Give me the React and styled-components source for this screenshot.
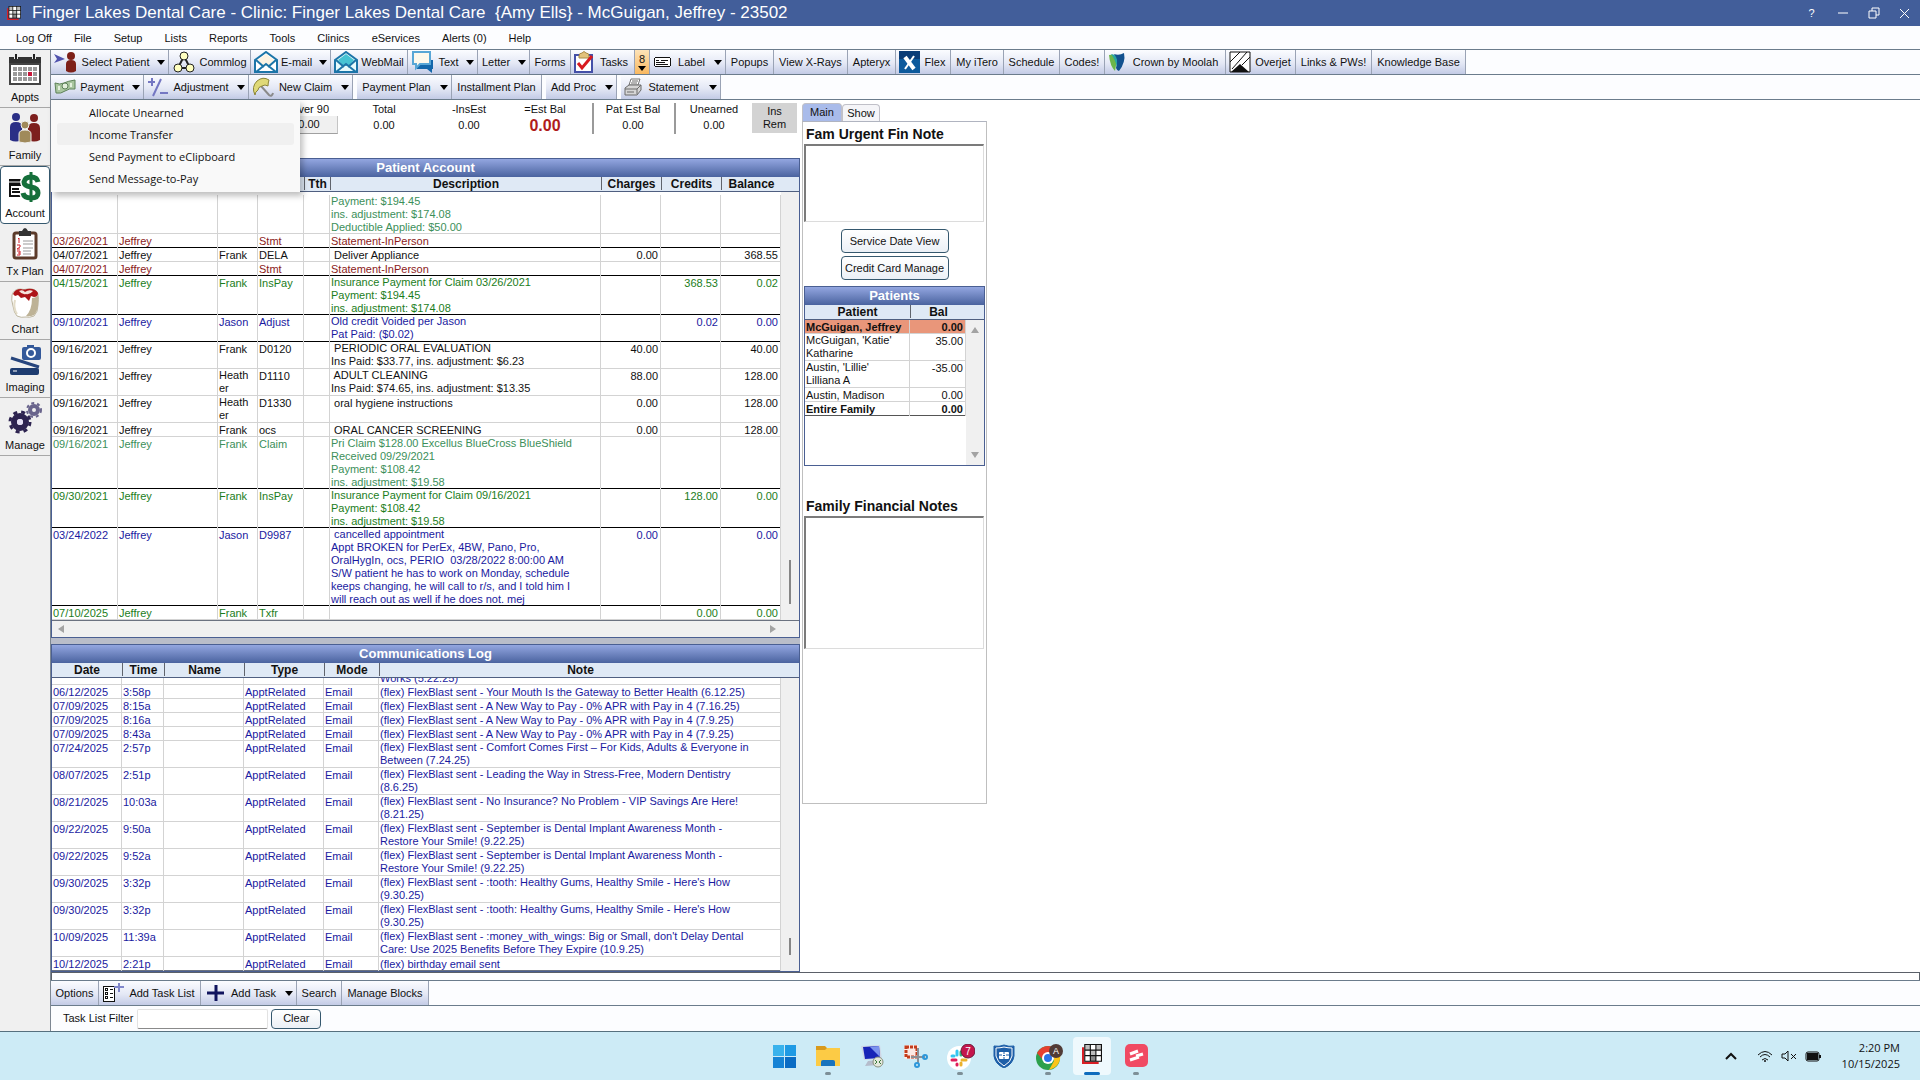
import React from 'react'
import styled, { createGlobalStyle, css } from 'styled-components'

const GlobalStyle = createGlobalStyle`
    * { box-sizing: border-box; }
    body {
        margin: 0;
        font-family: "Liberation Sans", Arial, sans-serif;
        font-size: 11px;
        line-height: 13px;
        color: #111111;
        background: #ffffff;
    }
    button, input, textarea { font: inherit; color: inherit; }
    button { padding: 0; cursor: pointer; }
    svg { display: block; flex: none; }
`

const Page = styled.div`
    display: flex;
    flex-direction: column;
    height: 100vh;
`
const TitleBar = styled.header`
    display: flex;
    align-items: center;
    gap: 11px;
    height: 26px;
    padding-left: 7px;
    flex: none;
    color: #ffffff;
    background: #425e9a;
`
const Title = styled.h1`
    flex: 1;
    margin: 0;
    font-size: 17px;
    line-height: 20px;
    font-weight: 400;
    white-space: pre;
`
const WindowControls = styled.div`
    display: flex;
`
const WindowButton = styled.button`
    display: flex;
    align-items: center;
    justify-content: center;
    width: 31px;
    height: 26px;
    border: 0;
    color: #ffffff;
    background: transparent;
`
const MenuBar = styled.nav`
    display: flex;
    align-items: center;
    height: 23px;
    padding: 1px 0 0 5px;
    flex: none;
    background: #fcfdff;
`
const MenuLink = styled.a`
    padding: 0 11px;
    color: #111111;
    text-decoration: none;
`
const Body = styled.div`
    display: flex;
    flex: 1;
    min-height: 0;
    border-bottom: 1px solid #56707e;
`
const Sidebar = styled.nav`
    width: 51px;
    flex: none;
    border-top: 1px solid #6b7c8c;
    border-right: 1px solid #7d8792;
    background: #f0f0f0;
`
const ModuleButton = styled.button`
    display: flex;
    flex-direction: column;
    align-items: center;
    justify-content: space-between;
    width: 50px;
    height: 58px;
    padding: 4px 0 3px;
    border: 0;
    border-bottom: 1px solid #a8a8a8;
    background: #f0f0f0;
    ${p => p.$active && css`
        border: 1px solid #35586e;
        border-radius: 4px;
        background: #ffffff;
    `}
`
const Content = styled.div`
    display: flex;
    flex-direction: column;
    flex: 1;
    min-width: 0;
`
const Toolbar = styled.div`
    display: flex;
    height: 25px;
    flex: none;
    border-top: 1px solid #6b7c8c;
    background: #fcfdff;
`
const ToolItem = styled.div`
    position: relative;
    display: flex;
    width: ${p => p.$width}px;
    margin-right: ${p => p.$space || 0}px;
`
const ToolButton = styled.button`
    display: flex;
    align-items: center;
    width: 100%;
    padding-left: ${p => p.$icon ? 3 : 0}px;
    border: 0;
    border-right: 1px solid #9aa3b5;
    white-space: nowrap;
    background: ${p => p.$hot
        ? 'linear-gradient(#fde3b8, #f9b860)'
        : 'linear-gradient(#fbfcff, #e4e8f5 55%, #c3cbe6)'};
`
const ToolLabel = styled.span`
    flex: 1;
    text-align: center;
`
const ArrowBox = styled.span`
    display: flex;
    justify-content: center;
    width: 15px;
`
const DropMenu = styled.ul`
    position: absolute;
    z-index: 5;
    top: 25px;
    left: 0;
    width: 249px;
    margin: 0;
    padding: 1px 6px 3px;
    list-style: none;
    background: #f9f9f9;
    box-shadow: 3px 4px 6px rgba(0, 0, 0, 0.25);
`
const DropItem = styled.button`
    display: block;
    width: 100%;
    height: 22px;
    padding-left: 32px;
    border: 0;
    border-radius: 3px;
    font-family: "Open Sans", "Noto Sans", sans-serif;
    font-size: 11px;
    text-align: left;
    background: ${p => p.$active ? '#f0f0f0' : 'transparent'};
`
const Workspace = styled.div`
    display: flex;
    gap: 2px;
    flex: 1;
    min-height: 0;
    border-top: 1px solid #6b7c8c;
`
const AccountColumn = styled.main`
    display: flex;
    flex-direction: column;
    width: 749px;
    min-height: 0;
    flex: none;
`
const Summary = styled.div`
    display: flex;
    height: 58px;
    padding: 3px 0 0 230px;
    flex: none;
`
const Stat = styled.div`
    display: flex;
    flex-direction: column;
    align-items: center;
    width: ${p => p.$width}px;
`
const StatValue = styled.span`
    display: flex;
    align-items: center;
    justify-content: center;
    width: 100%;
    height: 18px;
    ${p => p.$boxed && css`
        border-right: 1px solid #c4c4c4;
        border-bottom: 1px solid #a0a0a0;
        background: #f0f0f0;
    `}
    ${p => p.$total && css`
        color: #b01c1c;
        font-size: 16px;
        font-weight: 700;
    `}
`
const StatDivider = styled.span`
    width: 2px;
    height: 31px;
    margin-left: ${p => p.$gap || 0}px;
    background: #9a9a9a;
`
const InsRemButton = styled.button`
    width: 45px;
    height: 30px;
    border: 0;
    background: #d3d3d3;
`
const Splitter = styled.div`
    height: 6px;
    flex: none;
    background: #b9bdc9;
`
const Panel = styled.section`
    display: flex;
    flex-direction: column;
    min-height: 0;
    flex: ${p => p.$grow ? 1 : 'none'};
    border: 1px solid #4a5f92;
    background: #ffffff;
`
const PanelTitle = styled.h2`
    height: 18px;
    flex: none;
    margin: 0;
    color: #ffffff;
    font-size: 13px;
    line-height: 18px;
    text-align: center;
    background: linear-gradient(#93a6e0, #4a639f);
`
const PanelBody = styled.div`
    display: flex;
    flex: 1;
    min-height: 0;
`
const Table = styled.table`
    display: flex;
    flex-direction: column;
    flex: 1;
    min-width: 0;
    min-height: 0;
    thead, tbody { display: block; }
    tbody {
        display: flex;
        flex-direction: column;
        justify-content: ${p => p.$scrolled ? 'flex-end' : 'flex-start'};
        flex: 1;
        min-height: 0;
        overflow: hidden;
    }
    tr {
        display: grid;
        flex: none;
        grid-template-columns: ${p => p.$columns};
    }
`
const HeadRow = styled.tr`
    height: 15px;
    border-bottom: 1px solid #4f5f80;
    background: #dfe9f5;
`
const HeadCell = styled.th`
    display: flex;
    justify-content: center;
    height: 13px;
    padding: 0;
    font-size: 12px;
    line-height: 14px;
    & + & { border-left: 1px solid #60646c; }
`
const Row = styled.tr`
    color: ${p => p.$color};
    border-bottom: 1px solid ${p => p.$line || '#d3d3d3'};
    background: ${p => p.$fill || 'transparent'};
    font-weight: ${p => p.$bold ? 700 : 400};
    padding-top: ${p => p.$first ? 3 : 0}px;
`
// one-line text sits a pixel lower than the first line of a wrapped one
const Cell = styled.td`
    min-width: 0;
    padding: ${p => p.$lines === 1 ? 1 : 0}px 2px 0 1px;
    white-space: pre;
    text-align: ${p => p.$right ? 'right' : 'left'};
    border-right: 1px solid #d3d3d3;
    margin-bottom: ${p => p.$lines === 2 ? 0 : -1}px;
`
const Track = styled.div`
    display: flex;
    flex-direction: column;
    width: 18px;
    flex: none;
    background: #f0f0f0;
`
const TrackHead = styled.div`
    height: 15px;
    flex: none;
    border-bottom: 1px solid #4f5f80;
    background: #dfe9f5;
`
const TrackBody = styled.div`
    display: flex;
    flex-direction: column;
    align-items: center;
    justify-content: ${p => p.$spread ? 'space-between' : 'flex-end'};
    flex: 1;
    padding: ${p => p.$spread ? '6px 0' : '0 0 16px'};
`
const Thumb = styled.span`
    width: 2px;
    height: ${p => p.$size}px;
    background: #868686;
`
const HorizontalTrack = styled.div`
    display: flex;
    align-items: center;
    justify-content: space-between;
    height: 17px;
    padding: 0 22px 0 5px;
    border-top: 1px solid #6b7280;
    background: #f0f0f0;
`
const SideColumn = styled.aside`
    display: flex;
    flex-direction: column;
    width: 185px;
    flex: none;
    padding-top: 3px;
`
const Tabs = styled.div`
    display: flex;
    align-items: flex-end;
    height: 18px;
`
const Tab = styled.button`
    width: ${p => p.$active ? 40 : 38}px;
    height: ${p => p.$active ? 18 : 17}px;
    border: 1px solid #c0c0c8;
    border-bottom: 0;
    border-radius: 4px 4px 0 0;
    background: ${p => p.$active ? '#a9bbea' : '#f5f5f8'};
`
const TabPanel = styled.div`
    display: flex;
    flex-direction: column;
    height: 683px;
    padding: 2px 1px;
    border: 1px solid #bfbfbf;
    border-top-color: #b0b4c0;
`
const NoteLabel = styled.label`
    padding-left: 2px;
    font-size: 14px;
    font-weight: 700;
    line-height: 20px;
`
const NoteBox = styled.textarea`
    display: block;
    width: 180px;
    height: ${p => p.$height}px;
    border: 1px solid #dcdcdc;
    border-top: 2px solid #7b7b7b;
    border-left: 2px solid #7b7b7b;
    outline: 0;
    resize: none;
    background: #ffffff;
`
const PanelButtons = styled.div`
    display: flex;
    flex-direction: column;
    align-items: center;
    gap: 3px;
    padding: 7px 0 6px;
`
const Button = styled.button`
    width: ${p => p.$width}px;
    height: ${p => p.$height}px;
    border: 1px solid #35586e;
    border-radius: 4px;
    white-space: nowrap;
    background: linear-gradient(#ffffff, #ebf0f6);
`
const PatientsArea = styled.div`
    display: flex;
    flex-direction: column;
    height: 180px;
    margin-bottom: 30px;
`
const TaskSplit = styled.div`
    height: 8px;
    flex: none;
    border: 1px solid #5b6068;
    border-bottom: 0;
`
const FilterBar = styled.form`
    display: flex;
    align-items: center;
    height: 26px;
    padding-left: 12px;
    flex: none;
    border-top: 1px solid #6b7c8c;
    background: #fcfdff;
`
const FilterInput = styled.input`
    width: 131px;
    height: 20px;
    margin: 0 3px 0 4px;
    border: 1px solid #e2e2e2;
    border-bottom-color: #8a8a8a;
    border-radius: 2px;
    outline: 0;
    background: #ffffff;
`
const Taskbar = styled.footer`
    display: grid;
    grid-template-columns: 1fr auto 1fr;
    align-items: center;
    height: 48px;
    flex: none;
    background: #cdebf6;
`
const AppList = styled.div`
    display: flex;
    gap: 6px;
    grid-column: 2;
`
const AppButton = styled.button`
    display: flex;
    flex-direction: column;
    align-items: center;
    justify-content: space-between;
    width: 38px;
    height: 38px;
    padding-top: 7px;
    border: 0;
    border-radius: 4px;
    background: ${p => p.$active ? '#eff9fd' : 'transparent'};
`
const RunningMark = styled.span`
    width: ${p => p.$active ? 16 : 6}px;
    height: 3px;
    border-radius: 2px;
    background: ${p => p.$active ? '#0f6cbd' : p.$running ? '#7d8f97' : 'transparent'};
`
const Tray = styled.div`
    display: flex;
    align-items: center;
    justify-content: flex-end;
    gap: 8px;
    padding-right: 20px;
`
const TrayButton = styled.button`
    margin-right: 12px;
    border: 0;
    background: transparent;
`
const Clock = styled.time`
    width: 71px;
    font-family: "Open Sans", "Noto Sans", sans-serif;
    line-height: 16px;
    text-align: right;
`

const Icon = ({ w = 22, h = 22, box, children }) => (
    <svg width={w} height={h} viewBox={box || `0 0 ${w} ${h}`} fill="none" aria-hidden="true">{children}</svg>
)

const DownArrow = () => <Icon w={8} h={5}><path d="M0 0h8L4 5z" fill="#000" /></Icon>
const GrayArrow = ({ turn = 0 }) => (
    <Icon w={8} h={8}><path d="M4 1l4 6H0z" fill="#a3a3a3" transform={`rotate(${turn} 4 4)`} /></Icon>
)

const GridLogo = ({ size = 16 }) => (
    <Icon w={size} h={size} box="0 0 18 18">
        <path d="M0 3v15h15v-2H2V3z" fill="#d81f26" />
        <path d="M2 0h16v16H2z" fill="#111" />
        <path d="M3 1h4v4H3zM8 6h4v4H8zM13 1h4v4h-4z" fill="#bdbdbd" />
        <path d="M8 1h4v4H8zM3 6h4v4H3zM13 6h4v4h-4zM3 11h4v4H3zM13 11h4v4h-4z" fill="#fff" />
        <path d="M8 11h4v4H8z" fill="#8a8a8a" />
    </Icon>
)

// module icons
const ApptsIcon = () => (
    <Icon w={34} h={32}>
        <path d="M1 3h32v7H1z" fill="#333" />
        <path d="M2 10h30v20H2z" fill="#fff" stroke="#444" strokeWidth="2" />
        <path d="M8 0v5M26 0v5" stroke="#eee" strokeWidth="4" />
        <path d="M8 0v5M26 0v5" stroke="#222" strokeWidth="2" />
        {[13, 18, 23].map(y => [5, 10, 15, 20, 25].map(x => (
            <rect key={`${x}-${y}`} x={x} y={y} width="4" height="4" fill={x === 20 && y === 18 ? '#c8173b' : '#9a9a9a'} />
        )))}
    </Icon>
)
const FamilyIcon = () => (
    <Icon w={34} h={32}>
        <circle cx="8" cy="5" r="4" fill="#2b2f86" />
        <path d="M2 28V15q0-5 6-5t6 5v13q-6 3-12 0z" fill="#2b2f86" />
        <circle cx="26" cy="6" r="4" fill="#7d1f1d" />
        <path d="M20 28V16q0-5 6-5t6 5v12q-6 3-12 0z" fill="#7d1f1d" />
        <circle cx="17" cy="13" r="4" fill="#a08a5b" stroke="#f0f0f0" />
        <path d="M11 30v-8q0-4 6-4t6 4v8q-6 2-12 0z" fill="#a08a5b" stroke="#f0f0f0" />
    </Icon>
)
const AccountIcon = () => (
    <Icon w={34} h={32}>
        <path d="M1 8h16v18H1z" fill="#111" />
        <path d="M3 15h14v9H3z" fill="#fff" />
        <path d="M1 11h12" stroke="#fff" />
        <path d="M4 18h7M4 21h8" stroke="#111" strokeWidth="2" />
        <path d="M30 11q-1-5-7-5t-7 5q0 4 7 5t7 6q0 5-7 5t-8-5" stroke="#fff" strokeWidth="8" />
        <path d="M30 11q-1-5-7-5t-7 5q0 4 7 5t7 6q0 5-7 5t-8-5" stroke="#156f3a" strokeWidth="5" />
        <path d="M23 1v30" stroke="#156f3a" strokeWidth="3" />
    </Icon>
)
const TxPlanIcon = () => (
    <Icon w={26} h={32}>
        <rect x="2" y="5" width="22" height="25" rx="2" fill="#fff" stroke="#5c3b2a" strokeWidth="3" />
        <path d="M7 3h3q3-6 6 0h3v5H7z" fill="#333" />
        <path d="M11 13h10M11 16h10M11 20h10M11 23h8M11 26h8" stroke="#999" />
        <path d="M6 11l1-1v5M5 17h3v2l-3 2h3M5 23h3v4H5M6 25h2" stroke="#d2232a" />
    </Icon>
)
const ChartIcon = () => (
    <Icon w={30} h={32}>
        <path d="M2 9q2-6 8-6 4 1 8 0 8-1 10 5 1 5 0 11 0 7-4 11-5 2-8 1-5 1-9-1-3-3-4-10Q1 14 2 9z" fill="#ffffff" stroke="#bcb59f" />
        <path d="M22 12q4 0 6-3v11q-1 6-4 9-4 2-8 1 6-6 6-18z" fill="#bdb296" />
        <path d="M5 14q-2 8 2 14" stroke="#e3dcc8" strokeWidth="2" />
        <path d="M3 8q2-5 8-5 3 1 6 0 8-1 11 4 0 4-4 4l-3-1-2 5-4-4-4 1-3-3-3 1z" fill="#ad1418" />
        <path d="M9 5q4-2 6 1 4-3 8-1-3 4-7 3-4 1-7-3z" fill="#f6e2dc" />
    </Icon>
)
const ImagingIcon = () => (
    <Icon w={34} h={32}>
        <rect x="14" y="3" width="19" height="13" rx="2" fill="#34599a" />
        <path d="M19 1h7v3h-7z" fill="#34599a" />
        <circle cx="23" cy="9" r="4" fill="#34599a" stroke="#fff" strokeWidth="2" />
        <path d="M3 14l28 9" stroke="#27457d" strokeWidth="3" />
        <rect x="2" y="24" width="29" height="7" rx="2" fill="#1e3c70" />
        <path d="M5 27h4" stroke="#fff" />
    </Icon>
)
const ManageIcon = () => (
    <Icon w={34} h={32}>
        <circle cx="12" cy="20" r="6" stroke="#2d2350" strokeWidth="6" />
        <circle cx="12" cy="20" r="10" stroke="#2d2350" strokeWidth="3" strokeDasharray="4 4" />
        <circle cx="12" cy="20" r="3" fill="#e5e0f5" />
        <circle cx="26" cy="8" r="4" stroke="#69648c" strokeWidth="4" />
        <circle cx="26" cy="8" r="7" stroke="#69648c" strokeWidth="2" strokeDasharray="3 3" />
    </Icon>
)

// toolbar icons
const SelectIcon = () => (
    <Icon w={24} h={22}>
        <path d="M0 3l11 5-11 4 3-4z" fill="#5153ae" />
        <circle cx="17" cy="5" r="4" fill="#7d2019" />
        <path d="M12 20v-7q0-4 5-4t5 4v7q-5 3-10 0z" fill="#7d2019" />
    </Icon>
)
const CommlogIcon = () => (
    <Icon w={24} h={22}>
        <path d="M12 5L6 17h12z" stroke="#222" strokeWidth="2" />
        <circle cx="12" cy="5" r="4" fill="#ffffc0" stroke="#222" />
        <circle cx="6" cy="17" r="4" fill="#ffffc0" stroke="#222" />
        <circle cx="18" cy="17" r="4" fill="#ffffc0" stroke="#222" />
    </Icon>
)
const MailIcon = ({ paper = '#fdf3e2', flap = '#ffffff' }) => (
    <Icon w={24} h={22}>
        <path d="M1 9l11-8 11 8v12H1z" fill={flap} stroke="#1c75a8" strokeWidth="2" />
        <path d="M4 9l8-6 8 6-5 6H9z" fill={paper} />
        <path d="M2 9l8 7M22 9l-8 7M2 21l10-8 10 8" stroke="#1c75a8" strokeWidth="2" />
    </Icon>
)
const TextIcon = () => (
    <Icon w={24} h={22}>
        <path d="M6 9h16v9h-1v4l-5-4H6z" fill="#1367ab" />
        <path d="M2 1h17v12H9l-4 4v-4H2z" fill="#fdf8ec" stroke="#58a6d6" strokeWidth="2" />
    </Icon>
)
const TasksIcon = () => (
    <Icon w={20} h={22}>
        <rect x="1" y="4" width="17" height="17" fill="#fff" stroke="#4450a8" strokeWidth="2" />
        <path d="M5 5q0-3 3-3 2-3 4 0 3 0 3 3v2H5z" fill="#e2c27c" stroke="#a88a47" />
        <path d="M4 12l4 5L18 5" stroke="#d81a1f" strokeWidth="3" />
    </Icon>
)
const LabelIcon = () => (
    <Icon w={20} h={10}>
        <path d="M2 0h15v1h1v8h-1v1H2V9H1V1h1z" fill="#111" />
        <path d="M2 1h15v8H2z" fill="#fff" />
        <path d="M3 3h3v1H3zM8 3h7v1H8zM3 5h9v1H3zM3 7h12v1H3z" fill="#111" />
    </Icon>
)
const FlexIcon = () => (
    <Icon w={21} h={22}>
        <path d="M0 0h21v22H0z" fill="#0d5a9c" />
        <path d="M0 0h21v8H0z" fill="#0a3c77" />
        <path d="M6 6l9 12" stroke="#fff" strokeWidth="4" />
        <path d="M15 5L6 18" stroke="#fff" strokeWidth="2" />
    </Icon>
)
const CrownIcon = () => (
    <Icon w={18} h={20}>
        <path d="M1 3q4-1 7 1 1 8-1 15Q2 14 1 3z" fill="#6cb64a" />
        <path d="M6 2q5 2 10-1 2 9-5 18-2 0-3-3 2-7-2-14z" fill="#12518f" />
        <path d="M3 2q5 0 6 6v7Q7 7 3 2z" fill="#27a5a2" />
    </Icon>
)
const OverjetIcon = () => (
    <Icon w={22} h={22}>
        <path d="M1 1h20v20H1z" fill="#fff" stroke="#111" />
        <path d="M1 11L11 1M3 18L18 1M21 6l-8 8" stroke="#111" />
        <path d="M2 21l9-8 9 8z" fill="#111" />
    </Icon>
)
const MoneyIcon = () => (
    <Icon w={22} h={18}>
        <path d="M1 5q5 2 9 0t11-3v9q-6-1-10 2t-9 2z" fill="#a9c69f" stroke="#5d8158" />
        <circle cx="11" cy="8" r="3" fill="#e3efdd" stroke="#5d8158" />
        <path d="M5 8v4M17 5v4" stroke="#e3efdd" strokeWidth="2" />
    </Icon>
)
const PlusMinusIcon = () => (
    <Icon w={22} h={20}>
        <path d="M1 5h7M5 1v8M13 16h8M14 2L6 19" stroke="#7477c2" strokeWidth="2" />
    </Icon>
)
const UmbrellaIcon = () => (
    <Icon w={22} h={20}>
        <path d="M9 9l8 9q3 2 4-2" stroke="#8a8a8a" strokeWidth="2" />
        <path d="M3 18Q-1 10 5 4q6-5 12-1-1 3-1 6-3-2-6 0-4 1-4 4-3 2-3 5z" fill="#dfd978" stroke="#8b8538" />
    </Icon>
)
const PrinterIcon = () => (
    <Icon w={18} h={18}>
        <path d="M5 7l2-6h9l-2 6z" fill="#fff" stroke="#777" />
        <path d="M1 10l4-3h12v5l-4 5H1z" fill="#d6d6d6" stroke="#6b6b6b" />
        <path d="M1 11h12l4-4M13 11v5M3 14h7M8 3h6M7 5h6" stroke="#6b6b6b" />
    </Icon>
)
const TaskListIcon = () => (
    <Icon w={22} h={22}>
        <path d="M1 4h12v16H1z" fill="#111" />
        <path d="M2 5h10v14H2z" fill="#fff" />
        <path d="M3 6h3v3H3zM3 10h3v3H3zM3 14h3v3H3zM8 7h3v1H8zM8 11h3v1H8zM8 15h3v1H8z" fill="#111" />
        <path d="M4 7h1v1H4zM4 11h1v1H4zM4 15h1v1H4z" fill="#fff" />
        <path d="M17 1v9M12 5h10" stroke="#8187cb" strokeWidth="2" />
    </Icon>
)
const PlusIcon = () => <Icon w={22} h={18}><path d="M12 1v16M3 9h17" stroke="#11155e" strokeWidth="3" /></Icon>

// taskbar icons
const StartIcon = () => (
    <Icon w={24} h={24}>
        <path d="M1 1h11v11H1z" fill="#39b2ec" /><path d="M13 1h11v11H13z" fill="#1f9ae4" />
        <path d="M1 13h11v11H1z" fill="#1583d5" /><path d="M13 13h11v11H13z" fill="#0a6cc4" />
    </Icon>
)
const FolderIcon = () => (
    <Icon w={24} h={24}>
        <path d="M0 2h9l3 3h11v6H0z" fill="#d99a1c" />
        <path d="M0 6h9l2-2h13v18H0z" fill="#fccb45" />
        <path d="M5 22v-4q0-2 2-2h10q2 0 2 2v4z" fill="#1773bd" />
    </Icon>
)
const RemoteIcon = () => (
    <Icon w={24} h={24}>
        <path d="M1 2l19-1 2 14-18 1z" fill="#cfd6e6" /><path d="M3 3l16-1 1 12-15 1z" fill="#1724b8" />
        <path d="M10 3l9-1 1 11z" fill="#7c93ee" /><path d="M8 17l8-1 3 5-14 1z" fill="#b5bccb" />
        <circle cx="18" cy="18" r="5" fill="#e3e8dc" stroke="#89907f" />
        <path d="M15 16l2 2-2 2M21 16l-2 2 2 2" stroke="#3a7a3a" />
    </Icon>
)
const SnipIcon = () => (
    <Icon w={24} h={24}>
        <rect x="0" y="1" width="15" height="14" rx="2" fill="#fbe9e4" />
        <rect x="2" y="3" width="11" height="10" stroke="#c23c1c" strokeWidth="3" strokeDasharray="3 1" />
        <path d="M14 4v15M7 13h14" stroke="#8b8f95" strokeWidth="2" />
        <circle cx="21" cy="13" r="2" stroke="#2d97da" strokeWidth="2" /><circle cx="13" cy="21" r="2" stroke="#2d97da" strokeWidth="2" />
    </Icon>
)
const SlackIcon = () => (
    <Icon w={30} h={26}>
        <circle cx="14" cy="14" r="12" fill="#fff" />
        <g strokeWidth="3" strokeLinecap="round">
            <path d="M12 7v4M7 12h2" stroke="#36c5f0" /><path d="M16 8v3M20 12h1" stroke="#2eb67d" />
            <path d="M7 16h4M12 20v1" stroke="#e01e5a" /><path d="M17 16h4M16 19v2" stroke="#ecb22e" />
        </g>
        <circle cx="23" cy="7" r="7" fill="#c4154c" stroke="#6b1b3a" />
        <text x="23" y="11" fontSize="10" textAnchor="middle" fill="#fff">7</text>
    </Icon>
)
const ShieldIcon = () => (
    <Icon w={24} h={24}>
        <path d="M2 2q5 1 10-1 5 2 10 1v10q-1 8-10 12Q3 20 2 12z" fill="#1d5fa8" stroke="#1d5fa8" />
        <path d="M4 4q4 0 8-1 4 1 8 1v8q-1 6-8 10-7-4-8-10z" stroke="#fff" />
        <rect x="7" y="8" width="10" height="7" rx="1" fill="#fff" />
        <path d="M7 11h3M14 11h3M12 8v2M12 13v2" stroke="#1d5fa8" />
        <path d="M11 11h2v1h-2z" fill="#1d5fa8" />
    </Icon>
)
const ChromeIcon = () => (
    <Icon w={30} h={26}>
        <circle cx="15" cy="14" r="12" fill="#2da04c" />
        <path d="M4 9Q8 2 15 2t12 7l-1 1H15l-5 6z" fill="#e5402f" />
        <path d="M27 9q2 13-11 17l5-9q0-4-4-8z" fill="#fbc418" />
        <circle cx="15" cy="14" r="6" fill="#fff" /><circle cx="15" cy="14" r="4" fill="#2a73e8" />
        <circle cx="23" cy="7" r="7" fill="#503b36" />
        <text x="23" y="10" fontSize="9" textAnchor="middle" fill="#fff">A</text>
    </Icon>
)
const RedAppIcon = () => (
    <Icon w={24} h={24}>
        <rect x="1" y="0" width="23" height="23" rx="5" fill="#f04a63" />
        <path d="M6 10l8-3M12 12l7-2M6 16l9-3" stroke="#fff" strokeWidth="3" />
    </Icon>
)

const menus = ['Log Off', 'File', 'Setup', 'Lists', 'Reports', 'Tools', 'Clinics', 'eServices', 'Alerts (0)', 'Help']

const modules = [
    ['Appts', ApptsIcon],
    ['Family', FamilyIcon],
    ['Account', AccountIcon],
    ['Tx Plan', TxPlanIcon],
    ['Chart', ChartIcon],
    ['Imaging', ImagingIcon],
    ['Manage', ManageIcon],
]

const mainTools = [
    { label: 'Select Patient', width: 118, icon: <SelectIcon />, arrow: true },
    { label: 'Commlog', width: 82, icon: <CommlogIcon /> },
    { label: 'E-mail', width: 80, icon: <MailIcon />, arrow: true },
    { label: 'WebMail', width: 77, icon: <MailIcon paper="#45c3d3" flap="#e6fafc" /> },
    { label: 'Text', width: 70, icon: <TextIcon />, arrow: true },
    { label: 'Letter', width: 52, arrow: true },
    { label: 'Forms', width: 41 },
    { label: 'Tasks', width: 64, icon: <TasksIcon /> },
    { label: '8', width: 15, hot: true },
    { label: 'Label', width: 76, icon: <LabelIcon />, arrow: true },
    { label: 'Popups', width: 48 },
    { label: 'View X-Rays', width: 74 },
    { label: 'Apteryx', width: 48 },
    { label: 'Flex', width: 55, icon: <FlexIcon /> },
    { label: 'My iTero', width: 53 },
    { label: 'Schedule', width: 56 },
    { label: 'Codes!', width: 45 },
    { label: 'Crown by Moolah', width: 121, icon: <CrownIcon /> },
    { label: 'Overjet', width: 70, icon: <OverjetIcon /> },
    { label: 'Links & PWs!', width: 76 },
    { label: 'Knowledge Base', width: 94 },
]

const accountTools = [
    { label: 'Payment', width: 93, icon: <MoneyIcon />, arrow: true, menu: true },
    { label: 'Adjustment', width: 105, icon: <PlusMinusIcon />, arrow: true },
    { label: 'New Claim', width: 104, icon: <UmbrellaIcon />, arrow: true, space: 4 },
    { label: 'Payment Plan', width: 95, arrow: true },
    { label: 'Installment Plan', width: 90, space: 4 },
    { label: 'Add Proc', width: 71, arrow: true, space: 4 },
    { label: 'Statement', width: 100, icon: <PrinterIcon />, arrow: true },
]

const taskTools = [
    { label: 'Options', width: 48 },
    { label: 'Add Task List', width: 102, icon: <TaskListIcon /> },
    { label: 'Add Task', width: 96, icon: <PlusIcon />, arrow: true },
    { label: 'Search', width: 45 },
    { label: 'Manage Blocks', width: 87 },
]

const paymentMenu = ['Allocate Unearned', 'Income Transfer', 'Send Payment to eClipboard', 'Send Message-to-Pay']

const MAROON = '#8b1a1a'
const CLAIM = '#3c8f5a'
const GREEN = '#1b7d1b'
const BLUE = '#1a1aa0'
const BLACK = '#111111'

// color, dark bottom line, then the cells
const accountRows = [
    [CLAIM, 0, '', '', '', '', '', 'Payment: $194.45\nins. adjustment: $174.08\nDeductible Applied: $50.00', '', '', ''],
    [MAROON, 1, '03/26/2021', 'Jeffrey', '', 'Stmt', '', 'Statement-InPerson', '', '', ''],
    [BLACK, 0, '04/07/2021', 'Jeffrey', 'Frank', 'DELA', '', ' Deliver Appliance', '0.00', '', '368.55'],
    [MAROON, 1, '04/07/2021', 'Jeffrey', '', 'Stmt', '', 'Statement-InPerson', '', '', ''],
    [GREEN, 1, '04/15/2021', 'Jeffrey', 'Frank', 'InsPay', '', 'Insurance Payment for Claim 03/26/2021\nPayment: $194.45\nins. adjustment: $174.08', '', '368.53', '0.02'],
    [BLUE, 1, '09/10/2021', 'Jeffrey', 'Jason', 'Adjust', '', 'Old credit Voided per Jason\nPat Paid: ($0.02)', '', '0.02', '0.00'],
    [BLACK, 0, '09/16/2021', 'Jeffrey', 'Frank', 'D0120', '', ' PERIODIC ORAL EVALUATION\nIns Paid: $33.77, ins. adjustment: $6.23', '40.00', '', '40.00'],
    [BLACK, 0, '09/16/2021', 'Jeffrey', 'Heath\ner', 'D1110', '', ' ADULT CLEANING\nIns Paid: $74.65, ins. adjustment: $13.35', '88.00', '', '128.00'],
    [BLACK, 0, '09/16/2021', 'Jeffrey', 'Heath\ner', 'D1330', '', ' oral hygiene instructions', '0.00', '', '128.00'],
    [BLACK, 0, '09/16/2021', 'Jeffrey', 'Frank', 'ocs', '', ' ORAL CANCER SCREENING', '0.00', '', '128.00'],
    [CLAIM, 1, '09/16/2021', 'Jeffrey', 'Frank', 'Claim', '', 'Pri Claim $128.00 Excellus BlueCross BlueShield\nReceived 09/29/2021\nPayment: $108.42\nins. adjustment: $19.58', '', '', ''],
    [GREEN, 1, '09/30/2021', 'Jeffrey', 'Frank', 'InsPay', '', 'Insurance Payment for Claim 09/16/2021\nPayment: $108.42\nins. adjustment: $19.58', '', '128.00', '0.00'],
    [BLUE, 1, '03/24/2022', 'Jeffrey', 'Jason', 'D9987', '', ' cancelled appointment\nAppt BROKEN for PerEx, 4BW, Pano, Pro,\nOralHygIn, ocs, PERIO  03/28/2022 8:00:00 AM\nS/W patient he has to work on Monday, schedule\nkeeps changing, he will call to r/s, and I told him I\nwill reach out as well if he does not. mej', '0.00', '', '0.00'],
    [GREEN, 0, '07/10/2025', 'Jeffrey', 'Frank', 'Txfr', '', '', '', '0.00', '0.00'],
]
// the open payment menu covers the first four headings
const accountHeads = ['', '', '', '', 'Tth', 'Description', 'Charges', 'Credits', 'Balance']

const commHeads = ['Date', 'Time', 'Name', 'Type', 'Mode', 'Note']
const commRows = [
    ['06/12/2025', '3:58p', 'Your Mouth Is the Gateway to Better Health (6.12.25)'],
    ['07/09/2025', '8:15a', 'A New Way to Pay - 0% APR with Pay in 4 (7.16.25)'],
    ['07/09/2025', '8:16a', 'A New Way to Pay - 0% APR with Pay in 4 (7.9.25)'],
    ['07/09/2025', '8:43a', 'A New Way to Pay - 0% APR with Pay in 4 (7.9.25)'],
    ['07/24/2025', '2:57p', 'Comfort Comes First – For Kids, Adults & Everyone in\nBetween (7.24.25)'],
    ['08/07/2025', '2:51p', 'Leading the Way in Stress-Free, Modern Dentistry\n(8.6.25)'],
    ['08/21/2025', '10:03a', 'No Insurance? No Problem - VIP Savings Are Here!\n(8.21.25)'],
    ['09/22/2025', '9:50a', 'September is Dental Implant Awareness Month -\nRestore Your Smile! (9.22.25)'],
    ['09/22/2025', '9:52a', 'September is Dental Implant Awareness Month -\nRestore Your Smile! (9.22.25)'],
    ['09/30/2025', '3:32p', ":tooth: Healthy Gums, Healthy Smile - Here's How\n(9.30.25)"],
    ['09/30/2025', '3:32p', ":tooth: Healthy Gums, Healthy Smile - Here's How\n(9.30.25)"],
    ['10/09/2025', '11:39a', ":money_with_wings: Big or Small, don't Delay Dental\nCare: Use 2025 Benefits Before They Expire (10.9.25)"],
]

const patients = [
    { name: 'McGuigan, Jeffrey', bal: '0.00', bold: true, fill: '#e9967a' },
    { name: "McGuigan, 'Katie'\nKatharine", bal: '35.00' },
    { name: "Austin, 'Lillie'\nLilliana A", bal: '-35.00' },
    { name: 'Austin, Madison', bal: '0.00' },
    { name: 'Entire Family', bal: '0.00', bold: true, line: '#555555' },
]

const apps = [
    { name: 'Start', icon: <StartIcon /> },
    { name: 'File Explorer', icon: <FolderIcon />, running: true },
    { name: 'Remote Desktop', icon: <RemoteIcon /> },
    { name: 'Snipping Tool', icon: <SnipIcon /> },
    { name: 'Slack', icon: <SlackIcon />, running: true },
    { name: 'VPN', icon: <ShieldIcon /> },
    { name: 'Chrome', icon: <ChromeIcon />, running: true },
    { name: 'Practice', icon: <GridLogo size={20} />, active: true },
    { name: 'Messages', icon: <RedAppIcon />, running: true },
]

const ToolStrip = ({ tools }) => (
    <Toolbar>
        {tools.map(tool => (
            <ToolItem key={tool.label} $width={tool.width} $space={tool.space}>
                <ToolButton $icon={!!tool.icon} $hot={tool.hot}>
                    {tool.icon}
                    {tool.hot
                        ? <Stat $width={14}><span>{tool.label}</span><DownArrow /></Stat>
                        : <ToolLabel>{tool.label}</ToolLabel>}
                    {tool.arrow && <ArrowBox><DownArrow /></ArrowBox>}
                </ToolButton>
                {tool.menu && (
                    <DropMenu>
                        {paymentMenu.map((item, i) => (
                            <li key={item}><DropItem $active={i === 1}>{item}</DropItem></li>
                        ))}
                    </DropMenu>
                )}
            </ToolItem>
        ))}
    </Toolbar>
)

const TableHead = ({ heads }) => (
    <thead>
        <HeadRow>{heads.map((head, i) => <HeadCell key={i}>{head}</HeadCell>)}</HeadRow>
    </thead>
)

const TextCell = ({ text = '', right }) => (
    <Cell $right={right} $lines={text.split('\n').length}>{text}</Cell>
)

const AccountGrid = () => (
    <Panel>
        <PanelTitle>Patient Account</PanelTitle>
        <PanelBody>
            <Table $columns="66px 100px 40px 46px 26px 1fr 60px 60px 60px">
                <TableHead heads={accountHeads} />
                <tbody>
                    {accountRows.map(([color, dark, ...cells], i) => (
                        <Row key={i} $color={color} $line={dark ? '#000000' : undefined} $first={i === 0}>
                            {cells.map((cell, c) => <TextCell key={c} right={c > 5} text={cell} />)}
                        </Row>
                    ))}
                </tbody>
            </Table>
            <Track>
                <TrackHead />
                <TrackBody><Thumb $size={44} /></TrackBody>
            </Track>
        </PanelBody>
        <HorizontalTrack><GrayArrow turn={-90} /><GrayArrow turn={90} /></HorizontalTrack>
    </Panel>
)

const CommRow = ({ date, time, note, line }) => (
    <Row $color={BLUE} $line={line}>
        <TextCell text={date} />
        <TextCell text={time} />
        <TextCell />
        <TextCell text={date && 'ApptRelated'} />
        <TextCell text={date && 'Email'} />
        <TextCell text={note} />
    </Row>
)

const CommGrid = () => (
    <Panel $grow>
        <PanelTitle>Communications Log</PanelTitle>
        <PanelBody>
            <Table $scrolled $columns="70px 42px 80px 80px 55px 1fr">
                <TableHead heads={commHeads} />
                <tbody>
                    <CommRow note="Works (5.22.25)" />
                    {commRows.map(([date, time, note], i) => (
                        <CommRow key={i} date={date} time={time} note={'(flex) FlexBlast sent - ' + note} />
                    ))}
                    <CommRow date="10/12/2025" time="2:21p" note="(flex) birthday email sent" line="#6b7280" />
                </tbody>
            </Table>
            <Track>
                <TrackHead />
                <TrackBody><Thumb $size={17} /></TrackBody>
            </Track>
        </PanelBody>
    </Panel>
)

const PatientGrid = () => (
    <PatientsArea>
        <Panel $grow>
            <PanelTitle>Patients</PanelTitle>
            <PanelBody>
                <Table $columns="105px 1fr">
                    <TableHead heads={['Patient', 'Bal']} />
                    <tbody>
                        {patients.map(p => (
                            <Row key={p.name} $color={BLACK} $bold={p.bold} $fill={p.fill} $line={p.line}>
                                <TextCell text={p.name} />
                                <TextCell right text={p.bal} />
                            </Row>
                        ))}
                    </tbody>
                </Table>
                <Track>
                    <TrackHead />
                    <TrackBody $spread><GrayArrow /><GrayArrow turn={180} /></TrackBody>
                </Track>
            </PanelBody>
        </Panel>
    </PatientsArea>
)

const App = () => {
  return (
        <Page>
            <GlobalStyle />
            <TitleBar>
                <GridLogo size={14} />
                <Title>{'Finger Lakes Dental Care - Clinic: Finger Lakes Dental Care  {Amy Ells} - McGuigan, Jeffrey - 23502'}</Title>
                <WindowControls>
                    <WindowButton aria-label="Help">?</WindowButton>
                    <WindowButton aria-label="Minimize"><Icon w={10} h={10}><path d="M0 5h10" stroke="#fff" /></Icon></WindowButton>
                    <WindowButton aria-label="Restore"><Icon w={12} h={12}><path d="M1 4h7v7H1zM4 4V1h7v7H8" stroke="#fff" /></Icon></WindowButton>
                    <WindowButton aria-label="Close"><Icon w={11} h={11}><path d="M1 1l9 9M10 1l-9 9" stroke="#fff" /></Icon></WindowButton>
                </WindowControls>
            </TitleBar>
            <MenuBar>
                {menus.map(item => <MenuLink key={item} href="#">{item}</MenuLink>)}
            </MenuBar>
            <Body>
                <Sidebar>
                    {modules.map(([name, ModuleIcon]) => (
                        <ModuleButton key={name} $active={name === 'Account'}>
                            <ModuleIcon />
                            <span>{name}</span>
                        </ModuleButton>
                    ))}
                </Sidebar>
                <Content>
                    <ToolStrip tools={mainTools} />
                    <ToolStrip tools={accountTools} />
                    <Workspace>
                        <AccountColumn>
                            <Summary>
                                <Stat $width={57}><span>Over 90</span><StatValue $boxed>0.00</StatValue></Stat>
                                <Stat $width={92}><span>Total</span><StatValue>0.00</StatValue></Stat>
                                <Stat $width={78}><span>-InsEst</span><StatValue>0.00</StatValue></Stat>
                                <Stat $width={74}><span>=Est Bal</span><StatValue $total>0.00</StatValue></Stat>
                                <StatDivider $gap={10} />
                                <Stat $width={78}><span>Pat Est Bal</span><StatValue>0.00</StatValue></Stat>
                                <StatDivider $gap={2} />
                                <Stat $width={76}><span>Unearned</span><StatValue>0.00</StatValue></Stat>
                                <InsRemButton>Ins<br />Rem</InsRemButton>
                            </Summary>
                            <AccountGrid />
                            <Splitter />
                            <CommGrid />
                        </AccountColumn>
                        <SideColumn>
                            <Tabs>
                                <Tab $active>Main</Tab>
                                <Tab>Show</Tab>
                            </Tabs>
                            <TabPanel>
                                <NoteLabel htmlFor="urgent">Fam Urgent Fin Note</NoteLabel>
                                <NoteBox id="urgent" $height={78} />
                                <PanelButtons>
                                    <Button $width={108} $height={24}>Service Date View</Button>
                                    <Button $width={108} $height={24}>Credit Card Manage</Button>
                                </PanelButtons>
                                <PatientGrid />
                                <NoteLabel htmlFor="financial">Family Financial Notes</NoteLabel>
                                <NoteBox id="financial" $height={133} />
                            </TabPanel>
                        </SideColumn>
                    </Workspace>
                    <TaskSplit />
                    <ToolStrip tools={taskTools} />
                    <FilterBar onSubmit={e => e.preventDefault()}>
                        <label htmlFor="filter">Task List Filter</label>
                        <FilterInput id="filter" type="text" />
                        <Button type="button" $width={50} $height={20}>Clear</Button>
                    </FilterBar>
                </Content>
            </Body>
            <Taskbar>
                <AppList>
                    {apps.map(app => (
                        <AppButton key={app.name} aria-label={app.name} $active={app.active}>
                            {app.icon}
                            <RunningMark $active={app.active} $running={app.running} />
                        </AppButton>
                    ))}
                </AppList>
                <Tray>
                    <TrayButton aria-label="Show hidden icons">
                        <Icon w={12} h={8}><path d="M1 7l5-5 5 5" stroke="#111" strokeWidth="2" /></Icon>
                    </TrayButton>
                    <Icon w={16} h={13}>
                        <path d="M1 5q7-7 14 0M3 7q5-5 10 0M5 10q3-3 6 0" stroke="#111" />
                        <circle cx="8" cy="11" r="1" fill="#111" />
                    </Icon>
                    <Icon w={16} h={12}>
                        <path d="M1 4h3l3-3v10L4 8H1zM10 4l5 5M15 4l-5 5" stroke="#111" />
                    </Icon>
                    <Icon w={16} h={11}>
                        <rect x="1" y="1" width="13" height="9" rx="2" stroke="#111" />
                        <path d="M2 2h11v7H2z" fill="#111" /><path d="M15 4v3" stroke="#111" strokeWidth="2" />
                    </Icon>
                    <Clock>2:20 PM<br />10/15/2025</Clock>
                </Tray>
            </Taskbar>
        </Page>
  )
}

export default App
